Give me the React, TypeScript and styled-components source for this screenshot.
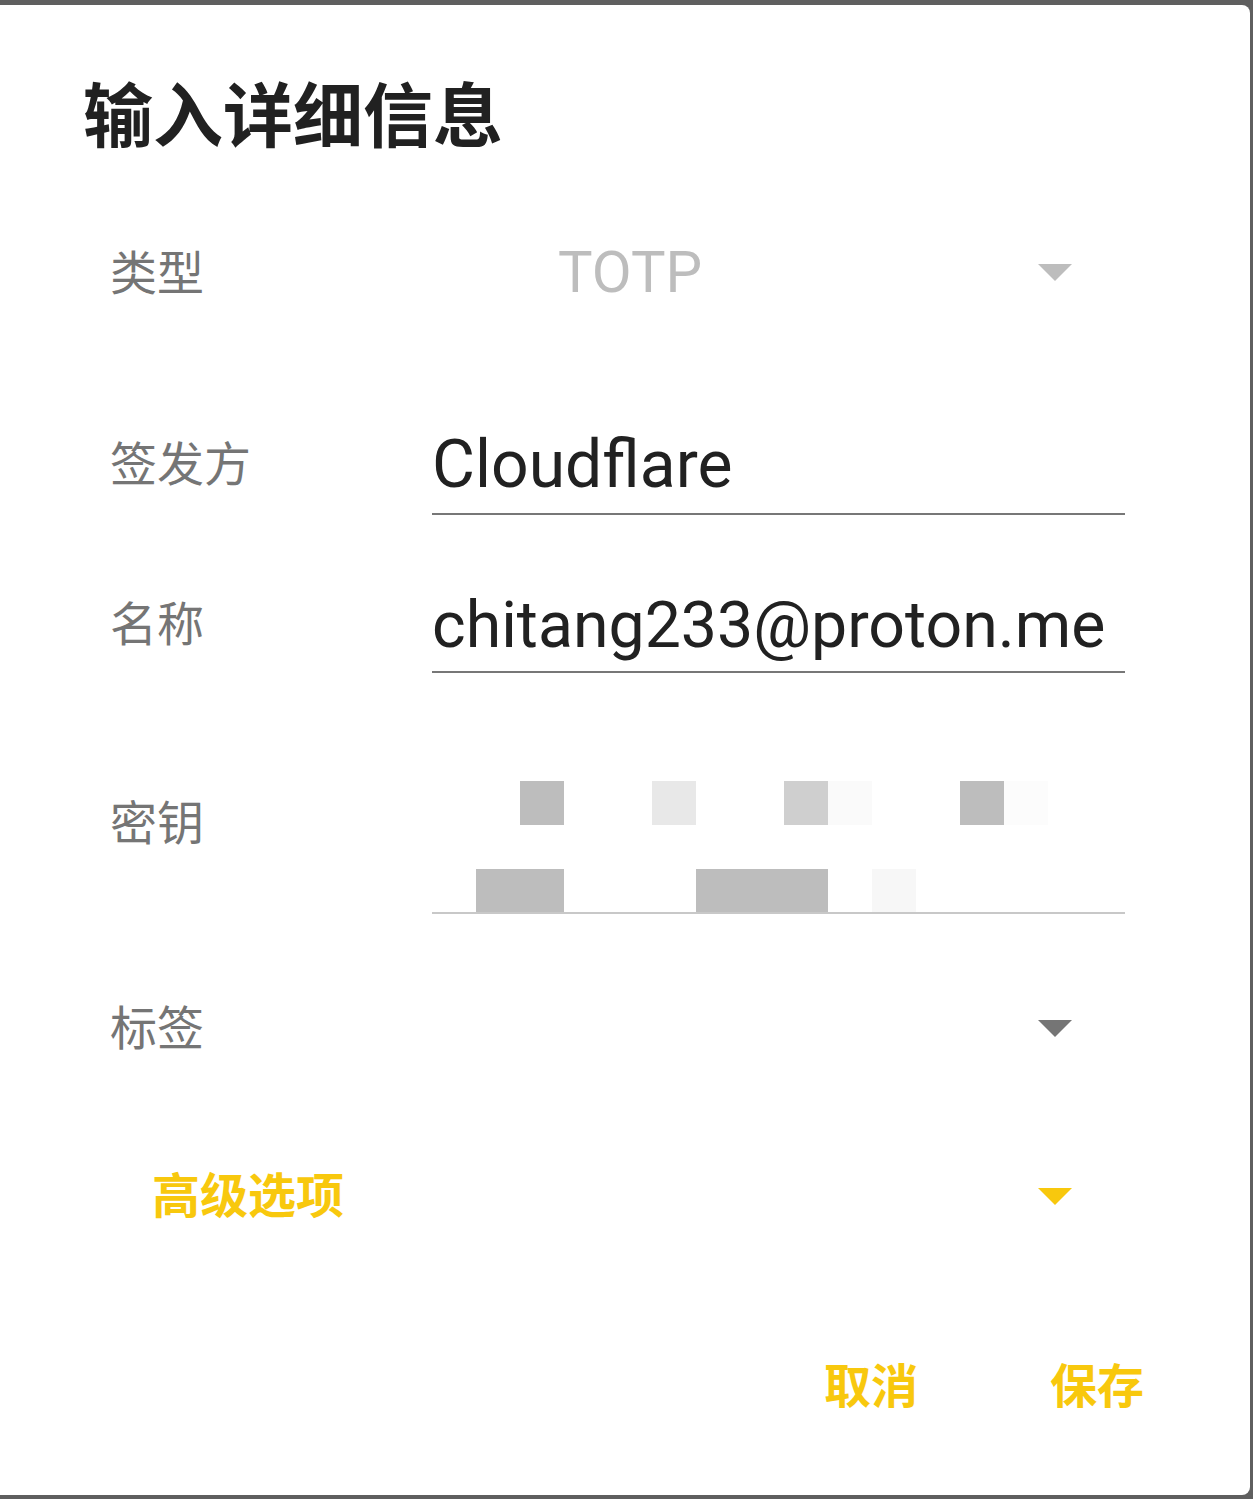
import React from "react";
import styled, { createGlobalStyle } from "styled-components";

const Global = createGlobalStyle`
  html, body { margin: 0; padding: 0; background: #5f5f5f; }
  body { font-family: Roboto, "Noto Sans CJK SC", sans-serif; }
  #root { height: 1499px; overflow: hidden; }
`;

const GOLD = "#f8c80d";

const Dialog = styled.div`
  box-sizing: border-box;
  margin-top: 5px;
  width: 1250px;
  height: 1490px;
  background: #ffffff;
  border-radius: 0 8px 8px 0;
  display: flex;
  flex-direction: column;
`;

const Title = styled.h1`
  margin: 65px 0 4px 83px;
  font-family: "Noto Sans CJK SC", sans-serif;
  font-weight: 700;
  font-size: 70px;
  line-height: 84px;
  color: #212121;
`;

const Row = styled.div<{ $top: number; $height?: number }>`
  display: flex;
  align-items: flex-start;
  margin-top: ${(p) => p.$top}px;
  padding-left: 110px;
  ${(p) => (p.$height ? `height: ${p.$height}px;` : "")}
`;

const Label = styled.div<{ $lh: number; $mt?: number }>`
  width: 322px;
  flex: none;
  font-family: "Noto Sans CJK SC", sans-serif;
  font-size: 47px;
  line-height: ${(p) => p.$lh}px;
  margin-top: ${(p) => p.$mt ?? 0}px;
  color: #757575;
`;

const Select = styled.div`
  width: 640px;
  height: 100px;
  display: flex;
  align-items: center;
  justify-content: space-between;
`;

const SelectValue = styled.span`
  padding-left: 126px;
  font-family: Roboto, sans-serif;
  font-size: 58px;
  color: #bdbdbd;
`;

const Caret = styled.span<{ $color: string }>`
  width: 0;
  height: 0;
  border-left: 17px solid transparent;
  border-right: 17px solid transparent;
  border-top: 17px solid ${(p) => p.$color};
`;

const Field = styled.div<{ $pb: number; $size: number }>`
  width: 693px;
  box-sizing: border-box;
  border-bottom: 2px solid #777777;
  padding-bottom: ${(p) => p.$pb}px;
  font-family: Roboto, sans-serif;
  font-size: ${(p) => p.$size}px;
  line-height: 80px;
  color: #212121;
  white-space: nowrap;
`;

const SecretField = styled.div`
  width: 693px;
  height: 133px;
  box-sizing: border-box;
  border-bottom: 2px solid #c8c8c8;
  display: grid;
  grid-template-columns: repeat(15, 44px);
  grid-template-rows: 44px 44px 44px;
  align-content: start;
`;

const Block = styled.div<{ $col: number; $span: number; $row: number; $shade: string }>`
  grid-column: ${(p) => p.$col + 1} / span ${(p) => p.$span};
  grid-row: ${(p) => p.$row};
  background: ${(p) => p.$shade};
  height: ${(p) => (p.$row === 3 ? 43 : 44)}px;
`;

const TagSpace = styled.div`
  width: 640px;
  height: 100px;
  display: flex;
  align-items: center;
  justify-content: flex-end;
`;

const Advanced = styled.div`
  margin-top: 78px;
  height: 80px;
  padding-left: 152px;
  width: 920px;
  display: flex;
  align-items: center;
  justify-content: space-between;
`;

const AdvancedText = styled.span`
  font-family: "Noto Sans CJK SC", sans-serif;
  font-weight: 700;
  font-size: 48px;
  line-height: 80px;
  margin-top: -8px;
  color: ${GOLD};
`;

const Actions = styled.div`
  margin-top: 107px;
  height: 80px;
  display: flex;
  justify-content: flex-end;
  align-items: center;
  gap: 132px;
  padding-right: 106px;
`;

const ActionButton = styled.button`
  border: none;
  background: none;
  padding: 0;
  font-family: "Noto Sans CJK SC", sans-serif;
  font-weight: 700;
  font-size: 47px;
  line-height: 80px;
  color: ${GOLD};
  cursor: pointer;
`;

const secretBlocks = [
  { col: 2, span: 1, row: 1, shade: "#bdbdbd" },
  { col: 5, span: 1, row: 1, shade: "#e8e8e8" },
  { col: 8, span: 1, row: 1, shade: "#cfcfcf" },
  { col: 9, span: 1, row: 1, shade: "#fafafa" },
  { col: 12, span: 1, row: 1, shade: "#bdbdbd" },
  { col: 13, span: 1, row: 1, shade: "#fcfcfc" },
  { col: 1, span: 2, row: 3, shade: "#bdbdbd" },
  { col: 6, span: 3, row: 3, shade: "#bdbdbd" },
  { col: 10, span: 1, row: 3, shade: "#f7f7f7" },
];

export default function App() {
  return (
    <>
      <Global />
      <Dialog>
        <Title>输入详细信息</Title>
        <Row $top={64} $height={100}>
          <Label $lh={100} $mt={-2}>类型</Label>
          <Select>
            <SelectValue>TOTP</SelectValue>
            <Caret $color="#bdbdbd" />
          </Select>
        </Row>
        <Row $top={103}>
          <Label $lh={80} $mt={-4}>签发方</Label>
          <Field $pb={8} $size={66}>Cloudflare</Field>
        </Row>
        <Row $top={70}>
          <Label $lh={80} $mt={-4}>名称</Label>
          <Field $pb={6} $size={64.4}>chitang233@proton.me</Field>
        </Row>
        <Row $top={108}>
          <Label $lh={64} $mt={7}>密钥</Label>
          <SecretField>
            {secretBlocks.map((b, i) => (
              <Block key={i} $col={b.col} $span={b.span} $row={b.row} $shade={b.shade} />
            ))}
          </SecretField>
        </Row>
        <Row $top={64} $height={100}>
          <Label $lh={100} $mt={-3}>标签</Label>
          <TagSpace>
            <Caret $color="#757575" />
          </TagSpace>
        </Row>
        <Advanced>
          <AdvancedText>高级选项</AdvancedText>
          <Caret $color={GOLD} />
        </Advanced>
        <Actions>
          <ActionButton>取消</ActionButton>
          <ActionButton>保存</ActionButton>
        </Actions>
      </Dialog>
    </>
  );
}
